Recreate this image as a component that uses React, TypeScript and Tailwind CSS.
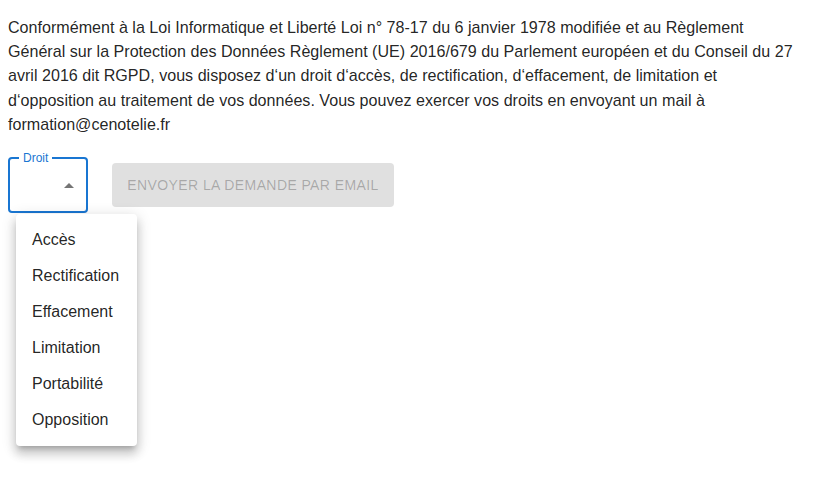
import React from "react";

export default function App() {
  const items = ["Accès", "Rectification", "Effacement", "Limitation", "Portabilité", "Opposition"];
  const lines = [
    "Conformément à la Loi Informatique et Liberté Loi n° 78-17 du 6 janvier 1978 modifiée et au Règlement",
    "Général sur la Protection des Données Règlement (UE) 2016/679 du Parlement européen et du Conseil du 27",
    "avril 2016 dit RGPD, vous disposez d‘un droit d‘accès, de rectification, d‘effacement, de limitation et",
    "d‘opposition au traitement de vos données. Vous pouvez exercer vos droits en envoyant un mail à",
    "formation@cenotelie.fr",
  ];
  return (
    <div className="relative w-[821px] h-[478px] bg-white overflow-hidden text-[rgba(0,0,0,0.87)]" style={{ fontFamily: '"Liberation Sans", Arial, sans-serif' }}>
      <div className="pl-2 pt-[15px]">
        <p className="text-[16.1px] leading-[24.2px]">
          {lines.map((l) => (
            <span key={l} className="block whitespace-nowrap">{l}</span>
          ))}
        </p>
        <div className="mt-[21px] flex items-start gap-[24px]">
          <div className="relative w-[80px] h-[56px] rounded-[4px] border-2 border-[#1976d2]">
            <span className="absolute -top-[9px] left-[9px] bg-white px-[4px] text-[12px] leading-[16px] text-[#1976d2]">Droit</span>
            <svg className="absolute left-[54px] top-[24px]" width="10" height="5" viewBox="0 0 10 5">
              <path d="M0 5 L5 0 L10 5 Z" fill="#757575" />
            </svg>
          </div>
          <button className="mt-[6px] h-[44px] w-[282px] rounded-[4px] bg-[#e0e0e0] text-[14px] tracking-[0.4px] uppercase text-[rgba(0,0,0,0.26)]">
            Envoyer la demande par email
          </button>
        </div>
      </div>
      <div className="absolute left-[16px] top-[214px] w-[121px] rounded-[4px] bg-white py-[8px] shadow-[0px_5px_5px_-3px_rgba(0,0,0,0.2),0px_8px_10px_1px_rgba(0,0,0,0.14),0px_3px_14px_2px_rgba(0,0,0,0.12)]">
        {items.map((it) => (
          <div key={it} className="h-[36px] flex items-center pl-[16px] text-[16px]">
            {it}
          </div>
        ))}
      </div>
    </div>
  );
}
